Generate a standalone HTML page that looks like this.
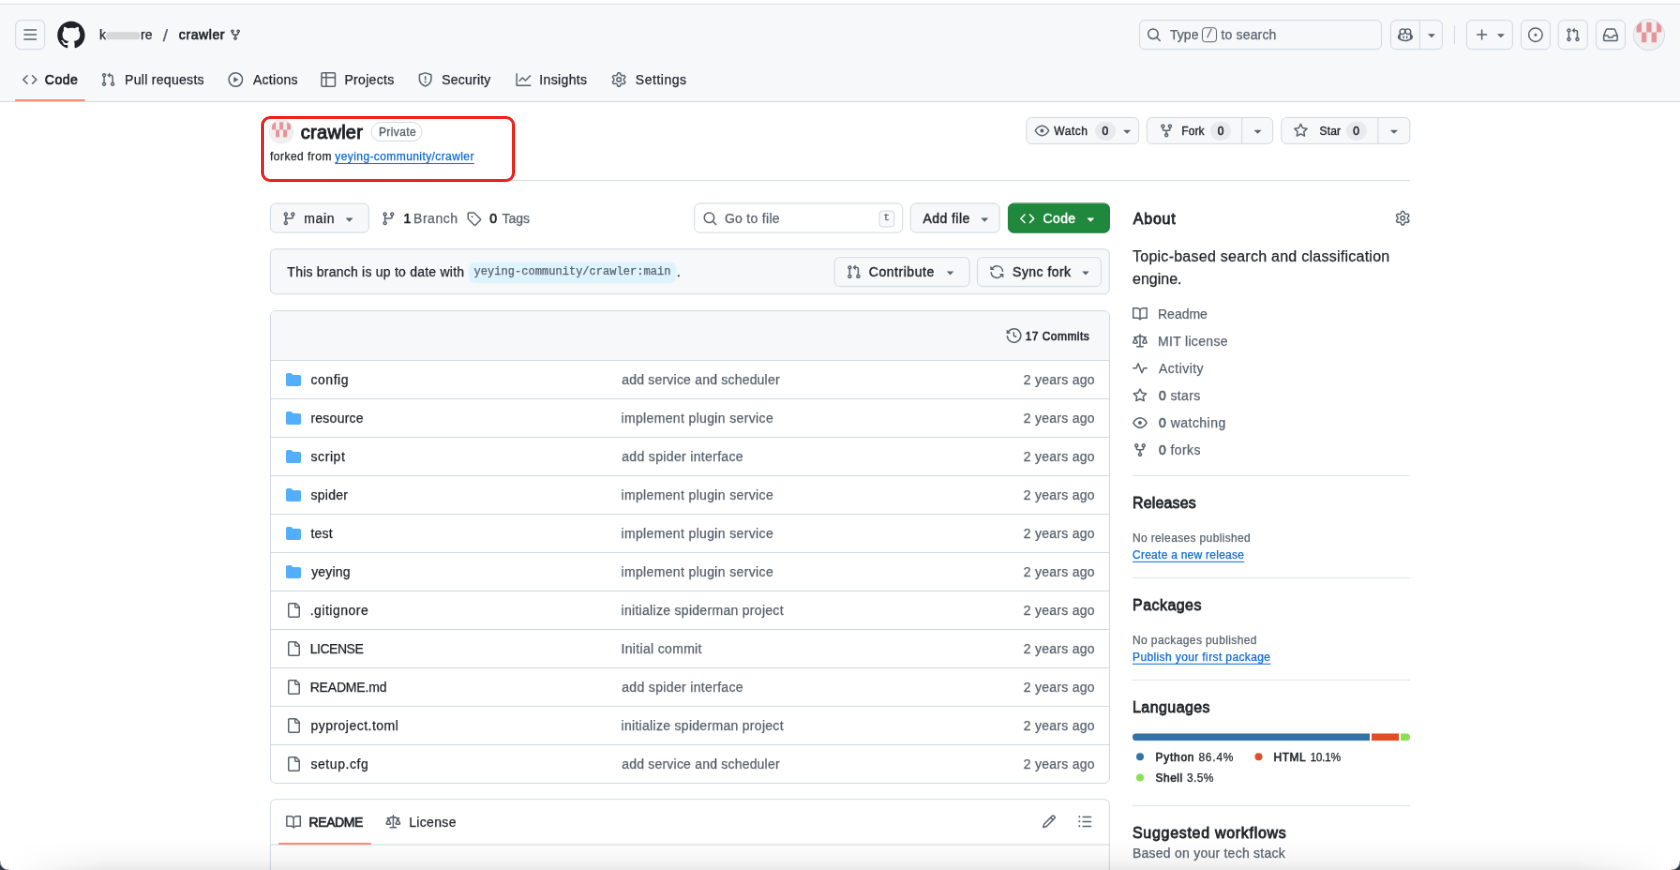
<!DOCTYPE html>
<html lang="en"><head><meta charset="utf-8"><title>crawler</title>
<style>
*{box-sizing:border-box}
html,body{margin:0;padding:0}
html{background:#fff}
body{width:1680px;height:870px;overflow:hidden;position:relative;background:#fff;font-family:"Liberation Sans",sans-serif;color:#1f2328}
#topstrip{position:absolute;left:0;top:0;width:1680px;height:5px;background:linear-gradient(#ffffff 0,#ffffff 55%,#ececec 80%,#e4e4e4 100%);z-index:5}
#page{position:absolute;left:0;top:0;width:1792px;height:930px;will-change:transform;-webkit-text-stroke:0.25px currentColor;transform:translateY(4.6px) scale(0.9375);transform-origin:0 0;font-size:14px;line-height:1.5}
svg{display:inline-block;vertical-align:text-bottom;overflow:visible;flex:none}
a{color:#0969da;text-decoration:underline;text-underline-offset:.2rem}
/* header */
#hdr{position:absolute;left:0;top:0;width:1792px;height:103.5px;background:#f6f8fa;box-shadow:inset 0 -1px 0 #d1d9e0}
.hbtn{position:absolute;height:32px;border:1px solid #d1d9e0;border-radius:6px;background:#f6f8fa;color:#59636e;display:flex;align-items:center;justify-content:center}
.tab{position:absolute;height:48px;display:flex;align-items:center;padding:0 8px;font-size:14px;color:#1f2328;white-space:nowrap}
.tab svg{color:#59636e;margin-right:8px}
.tab span{top:0.6px}
.tab.sel span{-webkit-text-stroke:0.66px currentColor}
.tab.sel:after{content:"";position:absolute;left:0;right:0;bottom:1.1px;height:2.3px;background:#fd8c73;border-radius:6px}
#search{position:absolute;height:32px;border:1px solid #d1d9e0;border-radius:6px;background:#f6f8fa;color:#59636e;display:flex;align-items:center;font-size:14px;white-space:nowrap}
.abs{position:absolute;white-space:nowrap}
.ft{display:inline-block;position:relative;white-space:nowrap}
/* table */
#files{position:absolute;left:288px;top:326.1px;width:896px;border:1px solid #d1d9e0;border-radius:6px;overflow:hidden;background:#fff}
#files .head{height:52px;background:#f6f8fa;position:relative}
.row{height:41px;border-top:1px solid #d1d9e0;position:relative;font-size:14px}
.row .ic{position:absolute;left:16px;top:12px}
.row .nm{position:absolute;left:41.7px;top:9.9px;line-height:21px;color:#1f2328;white-space:nowrap}
.row .msg{position:absolute;left:373.5px;top:9.9px;line-height:21px;color:#59636e;white-space:nowrap}
.row .age{position:absolute;left:803.6px;top:9.9px;line-height:21px;color:#59636e;white-space:nowrap}
.dot{position:absolute;width:8px;height:8px;border-radius:50%}
.ft b{font-weight:400;-webkit-text-stroke:0.66px currentColor}

.crumb{line-height:32px;font-size:14px}
#cr-sep{font-size:19px;top:0.9px}
#redact{background:#d6d7d9;border-radius:3px}
#kbd{position:absolute;top:7px;width:16.2px;height:16px;border:1px solid #59636e;border-radius:3.5px;font-size:12.5px;line-height:13px;text-align:center;color:#59636e;font-style:italic}

#redbox{position:absolute;left:261.3px;top:115.5px;width:254px;height:66.2px;border:3px solid #ee2620;border-radius:9px;z-index:6}
#botshadow{position:absolute;left:0;top:838px;width:1680px;height:32px;background:linear-gradient(rgba(0,0,0,0) 0,rgba(0,0,0,.015) 40%,rgba(0,0,0,.045) 75%,rgba(0,0,0,.085) 100%);z-index:7;-webkit-mask-image:linear-gradient(to right,rgba(0,0,0,0) 8px,#000 105px,#000 1575px,rgba(0,0,0,0) 1672px);mask-image:linear-gradient(to right,rgba(0,0,0,0) 8px,#000 105px,#000 1575px,rgba(0,0,0,0) 1672px)}
.corner{position:absolute;bottom:0;width:9px;height:9px;z-index:8;background:radial-gradient(circle at 9px 0,rgba(0,0,0,0) 8px,rgba(26,34,51,.9) 10px)}

#cr-k{letter-spacing:0.000px;transform:translateX(0.00px)}
#cr-re{letter-spacing:0.000px;transform:translateX(0.00px)}
#cr-sep{letter-spacing:0.000px;transform:translateX(0.00px)}
#cr-repo{letter-spacing:0.587px;transform:translateX(0.00px)}
#t0{letter-spacing:0.498px;transform:translateX(0.00px)}
#t1{letter-spacing:0.302px;transform:translateX(1.71px)}
#t2{letter-spacing:0.267px;transform:translateX(2.67px)}
#t3{letter-spacing:0.305px;transform:translateX(1.28px)}
#t4{letter-spacing:0.213px;transform:translateX(1.60px)}
#t5{letter-spacing:0.366px;transform:translateX(0.85px)}
#t6{letter-spacing:0.518px;transform:translateX(1.71px)}
#s-type{letter-spacing:0.000px;transform:translateX(1.60px)}
#s-to{letter-spacing:0.160px;transform:translateX(0.64px)}
#title{letter-spacing:0.267px;transform:translateX(0.85px)}
#privt{letter-spacing:0.391px;transform:translateX(0.00px)}
#fk1{letter-spacing:0.480px;transform:translateX(0.00px)}
#fk2{letter-spacing:0.408px;transform:translateX(0.00px)}
#w-t{letter-spacing:0.533px;transform:translateX(0.00px)}
#w-c{letter-spacing:0.000px;transform:translateX(0.00px)}
#f-t{letter-spacing:0.107px;transform:translateX(0.00px)}
#f-c{letter-spacing:0.000px;transform:translateX(0.00px)}
#st-t{letter-spacing:0.213px;transform:translateX(0.00px)}
#st-c{letter-spacing:0.000px;transform:translateX(0.00px)}
#m-t{letter-spacing:0.640px;transform:translateX(-1.07px)}
#br1{letter-spacing:0.000px;transform:translateX(0.00px)}
#br2{letter-spacing:0.512px;transform:translateX(0.00px)}
#tg1{letter-spacing:0.000px;transform:translateX(0.00px)}
#tg2{letter-spacing:0.000px;transform:translateX(0.00px)}
#gtf{letter-spacing:0.296px;transform:translateX(-0.75px)}
#af-t{letter-spacing:0.427px;transform:translateX(0.00px)}
#cd-t{letter-spacing:0.356px;transform:translateX(0.00px)}
#binfo{letter-spacing:0.228px;transform:translateX(0.75px)}
#bname-t{letter-spacing:0.034px;transform:translateX(0.00px)}
#ct-t{letter-spacing:0.545px;transform:translateX(-0.64px)}
#sy-t{letter-spacing:0.453px;transform:translateX(0.00px)}
#cm-t{letter-spacing:0.439px;transform:translateX(-0.85px)}
#rd-t{letter-spacing:-0.427px;transform:translateX(0.00px)}
#lc-t{letter-spacing:0.320px;transform:translateX(-1.07px)}
#h-about{letter-spacing:0.800px;transform:translateX(0.75px)}
#desc1{letter-spacing:0.255px;transform:translateX(0.00px)}
#desc2{letter-spacing:0.000px;transform:translateX(0.00px)}
#sl0{letter-spacing:0.000px;transform:translateX(-1.07px)}
#sl1{letter-spacing:0.320px;transform:translateX(-1.07px)}
#sl2{letter-spacing:0.457px;transform:translateX(0.00px)}
#sl3{letter-spacing:0.356px;transform:translateX(0.00px)}
#sl4{letter-spacing:0.474px;transform:translateX(0.00px)}
#sl5{letter-spacing:0.409px;transform:translateX(0.00px)}
#h-rel{letter-spacing:0.137px;transform:translateX(0.00px)}
#norel{letter-spacing:0.352px;transform:translateX(0.00px)}
#crel{letter-spacing:0.258px;transform:translateX(0.00px)}
#h-pkg{letter-spacing:0.457px;transform:translateX(0.00px)}
#nopkg{letter-spacing:0.389px;transform:translateX(0.00px)}
#ppkg{letter-spacing:0.384px;transform:translateX(0.00px)}
#h-lang{letter-spacing:0.427px;transform:translateX(0.00px)}
#lg-py{letter-spacing:0.725px;transform:translateX(0.00px)}
#lg-pyp{letter-spacing:0.773px;transform:translateX(0.00px)}
#lg-ht{letter-spacing:0.498px;transform:translateX(-0.75px)}
#lg-htp{letter-spacing:-0.347px;transform:translateX(-0.64px)}
#lg-sh{letter-spacing:0.480px;transform:translateX(0.00px)}
#lg-shp{letter-spacing:0.391px;transform:translateX(0.00px)}
#h-sug{letter-spacing:0.699px;transform:translateX(0.00px)}
#based{letter-spacing:0.237px;transform:translateX(0.00px)}
#n0{letter-spacing:0.555px;transform:translateX(0.75px)}
#g0{letter-spacing:0.204px;transform:translateX(0.75px)}
#a0{letter-spacing:0.256px;transform:translateX(-0.75px)}
#n1{letter-spacing:0.244px;transform:translateX(0.75px)}
#g1{letter-spacing:0.352px;transform:translateX(0.00px)}
#a1{letter-spacing:0.256px;transform:translateX(-0.75px)}
#n2{letter-spacing:0.597px;transform:translateX(0.75px)}
#g2{letter-spacing:0.337px;transform:translateX(0.75px)}
#a2{letter-spacing:0.256px;transform:translateX(-0.75px)}
#n3{letter-spacing:0.277px;transform:translateX(0.75px)}
#g3{letter-spacing:0.352px;transform:translateX(0.00px)}
#a3{letter-spacing:0.256px;transform:translateX(-0.75px)}
#n4{letter-spacing:0.213px;transform:translateX(0.75px)}
#g4{letter-spacing:0.352px;transform:translateX(0.00px)}
#a4{letter-spacing:0.256px;transform:translateX(-0.75px)}
#n5{letter-spacing:0.171px;transform:translateX(1.49px)}
#g5{letter-spacing:0.352px;transform:translateX(0.00px)}
#a5{letter-spacing:0.256px;transform:translateX(-0.75px)}
#n6{letter-spacing:0.498px;transform:translateX(0.00px)}
#g6{letter-spacing:0.300px;transform:translateX(0.00px)}
#a6{letter-spacing:0.256px;transform:translateX(-0.75px)}
#n7{letter-spacing:-0.480px;transform:translateX(0.00px)}
#g7{letter-spacing:0.328px;transform:translateX(0.00px)}
#a7{letter-spacing:0.256px;transform:translateX(-0.75px)}
#n8{letter-spacing:-0.187px;transform:translateX(0.00px)}
#g8{letter-spacing:0.337px;transform:translateX(0.75px)}
#a8{letter-spacing:0.256px;transform:translateX(-0.75px)}
#n9{letter-spacing:0.476px;transform:translateX(0.75px)}
#g9{letter-spacing:0.300px;transform:translateX(0.00px)}
#a9{letter-spacing:0.256px;transform:translateX(-0.75px)}
#n10{letter-spacing:0.560px;transform:translateX(0.75px)}
#g10{letter-spacing:0.204px;transform:translateX(0.75px)}
#a10{letter-spacing:0.256px;transform:translateX(-0.75px)}
</style></head>
<body>
<div id="topstrip"></div>
<div id="page">
<div id="hdr">
<div class="hbtn" style="left:0;top:0;transform:translate(16.20px,16.20px);width:32px"><svg width="16" height="16" viewBox="0 0 16 16" fill="currentColor"><path d="M1 2.75A.75.75 0 0 1 1.75 2h12.5a.75.75 0 0 1 0 1.5H1.75A.75.75 0 0 1 1 2.75Zm0 5A.75.75 0 0 1 1.75 7h12.5a.75.75 0 0 1 0 1.5H1.75A.75.75 0 0 1 1 7.75ZM1.75 12h12.5a.75.75 0 0 1 0 1.5H1.75a.75.75 0 0 1 0-1.5Z"/></svg></div>
<svg class="abs" style="left:0;top:0;transform:translate(59.90px,16.40px);color:#1f2328" width="32" height="32" viewBox="0 0 24 24" fill="currentColor"><path d="M12 1C5.923 1 1 5.923 1 12c0 4.867 3.149 8.979 7.521 10.436.55.096.756-.233.756-.522 0-.262-.013-1.128-.013-2.049-2.764.509-3.479-.674-3.699-1.292-.124-.317-.66-1.293-1.127-1.554-.385-.207-.936-.715-.014-.729.866-.014 1.485.797 1.691 1.128.99 1.663 2.571 1.196 3.204.907.096-.715.385-1.196.701-1.471-2.448-.275-5.005-1.224-5.005-5.432 0-1.196.426-2.186 1.128-2.956-.111-.275-.496-1.402.11-2.915 0 0 .921-.288 3.024 1.128a10.193 10.193 0 0 1 2.75-.371c.936 0 1.871.123 2.75.371 2.104-1.43 3.025-1.128 3.025-1.128.605 1.513.221 2.64.111 2.915.701.77 1.127 1.747 1.127 2.956 0 4.222-2.571 5.157-5.019 5.432.399.344.743 1.004.743 2.035 0 1.471-.014 2.654-.014 3.025 0 .289.206.632.756.522C19.851 20.979 23 16.854 23 12c0-6.077-4.922-11-11-11Z"/></svg>
<div class="abs crumb" style="left:0;top:0;transform:translate(106.03px,16.40px);"><span class="ft" id="cr-k">k</span></div>
<div class="abs" id="redact" style="left:0;top:0;transform:translate(113.17px,29.23px);width:35.9px;height:8.0px"></div>
<div class="abs crumb" style="left:0;top:0;transform:translate(149.97px,16.40px);"><span class="ft" id="cr-re">re</span></div>
<div class="abs crumb" style="left:0;top:0;transform:translate(173.87px,16.40px);color:#59636e"><span class="ft" id="cr-sep">/</span></div>
<div class="abs crumb" style="left:0;top:0;transform:translate(190.83px,16.40px);-webkit-text-stroke:0.66px currentColor"><span class="ft" id="cr-repo">crawler</span></div>
<svg class="abs" style="left:0;top:0;transform:translate(245.04px,26.11px);color:#1f2328" width="12" height="12" viewBox="0 0 12 12" fill="none" stroke="currentColor" stroke-width="1.05"><circle cx="2.9" cy="2.2" r="1.25"/><circle cx="9.1" cy="2.2" r="1.25"/><circle cx="6" cy="9.8" r="1.25"/><path d="M2.9 3.4v.9c0 1 .7 1.7 1.7 1.7h2.8c1 0 1.700-.7 1.700-1.700v-.9M6 6v2.600"/></svg>
<div class="tab sel" style="left:0;top:0;transform:translate(15.79px,56.00px);width:74.7px;"><svg width="16" height="16" viewBox="0 0 16 16" fill="currentColor"><path d="m11.28 3.22 4.25 4.25a.75.75 0 0 1 0 1.06l-4.25 4.25a.749.749 0 0 1-1.275-.326.749.749 0 0 1 .215-.734L13.94 8l-3.72-3.72a.749.749 0 0 1 .326-1.275.749.749 0 0 1 .734.215Zm-6.56 0a.751.751 0 0 1 1.042.018.751.751 0 0 1 .018 1.042L2.06 8l3.72 3.72a.749.749 0 0 1-.326 1.275.749.749 0 0 1-.734-.215L.47 8.53a.75.75 0 0 1 0-1.06Z"/></svg><span class="ft" id="t0">Code</span></div>
<div class="tab" style="left:0;top:0;transform:translate(99.31px,56.00px);"><svg width="16" height="16" viewBox="0 0 16 16" fill="currentColor"><path d="M1.5 3.25a2.25 2.25 0 1 1 3 2.122v5.256a2.251 2.251 0 1 1-1.5 0V5.372A2.25 2.25 0 0 1 1.5 3.25Zm5.677-.177L9.573.677A.25.25 0 0 1 10 .854V2.5h1A2.5 2.5 0 0 1 13.5 5v5.628a2.251 2.251 0 1 1-1.5 0V5a1 1 0 0 0-1-1h-1v1.646a.25.25 0 0 1-.427.177L7.177 3.427a.25.25 0 0 1 0-.354ZM3.75 2.5a.75.75 0 1 0 0 1.5.75.75 0 0 0 0-1.5Zm0 9.5a.75.75 0 1 0 0 1.5.75.75 0 0 0 0-1.5Zm8.25.75a.75.75 0 1 0 1.5 0 .75.75 0 0 0-1.5 0Z"/></svg><span class="ft" id="t1">Pull requests</span></div>
<div class="tab" style="left:0;top:0;transform:translate(235.31px,56.00px);"><svg width="16" height="16" viewBox="0 0 16 16" fill="currentColor"><path d="M8 0a8 8 0 1 1 0 16A8 8 0 0 1 8 0ZM1.5 8a6.5 6.5 0 1 0 13 0 6.5 6.5 0 0 0-13 0Zm4.879-2.773 4.264 2.559a.25.25 0 0 1 0 .428l-4.264 2.559A.25.25 0 0 1 6 10.559V5.442a.25.25 0 0 1 .379-.215Z"/></svg><span class="ft" id="t2">Actions</span></div>
<div class="tab" style="left:0;top:0;transform:translate(334.19px,56.00px);"><svg width="16" height="16" viewBox="0 0 16 16" fill="currentColor"><path d="M0 1.75C0 .784.784 0 1.75 0h12.5C15.216 0 16 .784 16 1.75v12.5A1.75 1.75 0 0 1 14.25 16H1.75A1.75 1.75 0 0 1 0 14.25ZM6.5 6.5v8h7.75a.25.25 0 0 0 .25-.25V6.5Zm8-1.5V1.75a.25.25 0 0 0-.25-.25H6.5V5Zm-13 1.5v7.75c0 .138.112.25.25.25H5v-8ZM5 5V1.5H1.75a.25.25 0 0 0-.25.25V5Z"/></svg><span class="ft" id="t3">Projects</span></div>
<div class="tab" style="left:0;top:0;transform:translate(437.65px,56.00px);"><svg width="16" height="16" viewBox="0 0 16 16" fill="currentColor"><path d="M7.467.133a1.748 1.748 0 0 1 1.066 0l5.25 1.68A1.75 1.75 0 0 1 15 3.48V7c0 1.566-.32 3.182-1.303 4.682-.983 1.498-2.585 2.813-5.032 3.855a1.697 1.697 0 0 1-1.33 0c-2.447-1.042-4.049-2.357-5.032-3.855C1.32 10.182 1 8.566 1 7V3.48a1.75 1.75 0 0 1 1.217-1.667Zm.61 1.429a.25.25 0 0 0-.153 0l-5.25 1.68a.25.25 0 0 0-.174.238V7c0 1.358.275 2.666 1.057 3.86.784 1.194 2.121 2.34 4.366 3.297a.196.196 0 0 0 .154 0c2.245-.956 3.582-2.104 4.366-3.298C13.225 9.666 13.5 8.36 13.5 7V3.48a.251.251 0 0 0-.174-.237l-5.25-1.68ZM8.75 4.75v3a.75.75 0 0 1-1.5 0v-3a.75.75 0 0 1 1.5 0ZM9 10.5a1 1 0 1 1-2 0 1 1 0 0 1 2 0Z"/></svg><span class="ft" id="t4">Security</span></div>
<div class="tab" style="left:0;top:0;transform:translate(542.40px,56.00px);"><svg width="16" height="16" viewBox="0 0 16 16" fill="currentColor"><path d="M1.5 1.75V13.5h13.75a.75.75 0 0 1 0 1.5H.75a.75.75 0 0 1-.75-.75V1.75a.75.75 0 0 1 1.5 0Zm14.28 2.53-5.25 5.25a.75.75 0 0 1-1.06 0L7 7.06 4.28 9.78a.751.751 0 0 1-1.042-.018.751.751 0 0 1-.018-1.042l3.25-3.25a.75.75 0 0 1 1.06 0L10 7.94l4.72-4.72a.751.751 0 0 1 1.042.018.751.751 0 0 1 .018 1.042Z"/></svg><span class="ft" id="t5">Insights</span></div>
<div class="tab" style="left:0;top:0;transform:translate(644.16px,56.00px);"><svg width="16" height="16" viewBox="0 0 16 16" fill="currentColor"><path d="M8 0a8.2 8.2 0 0 1 .701.031C9.444.095 9.99.645 10.16 1.29l.288 1.107c.018.066.079.158.212.224.231.114.454.243.668.386.123.082.233.09.299.071l1.103-.303c.644-.176 1.392.021 1.82.63.27.385.506.792.704 1.218.315.675.111 1.422-.364 1.891l-.814.806c-.049.048-.098.147-.088.294.016.257.016.515 0 .772-.01.147.038.246.088.294l.814.806c.475.469.679 1.216.364 1.891a7.977 7.977 0 0 1-.704 1.217c-.428.61-1.176.807-1.82.63l-1.102-.302c-.067-.019-.177-.011-.3.071a5.909 5.909 0 0 1-.668.386c-.133.066-.194.158-.211.224l-.29 1.106c-.168.646-.715 1.196-1.458 1.26a8.006 8.006 0 0 1-1.402 0c-.743-.064-1.289-.614-1.458-1.26l-.289-1.106c-.018-.066-.079-.158-.212-.224a5.738 5.738 0 0 1-.668-.386c-.123-.082-.233-.09-.299-.071l-1.103.303c-.644.176-1.392-.021-1.82-.63a8.12 8.12 0 0 1-.704-1.218c-.315-.675-.111-1.422.363-1.891l.815-.806c.05-.048.098-.147.088-.294a6.214 6.214 0 0 1 0-.772c.01-.147-.038-.246-.088-.294l-.815-.806C.635 6.045.431 5.298.746 4.623a7.920 7.920 0 0 1 .704-1.217c.428-.61 1.176-.807 1.82-.63l1.102.302c.067.019.177.011.3-.071.214-.143.437-.272.668-.386.133-.066.194-.158.211-.224l.29-1.106C6.009.645 6.556.095 7.299.03 7.530.010 7.764 0 8 0Zm-.571 1.525c-.036.003-.108.036-.137.146l-.289 1.105c-.147.561-.549.967-.998 1.189-.173.086-.34.183-.5.29-.417.278-.97.423-1.529.27l-1.103-.303c-.109-.03-.175.016-.195.045-.22.312-.412.644-.573.99-.014.031-.021.11.059.19l.815.806c.411.406.562.957.53 1.456a4.709 4.709 0 0 0 0 .582c.032.499-.119 1.05-.53 1.456l-.815.806c-.081.08-.073.159-.059.19.162.346.353.677.573.989.02.03.085.076.195.046l1.102-.303c.56-.153 1.113-.008 1.53.27.161.107.328.204.501.29.447.222.85.629.997 1.189l.289 1.105c.029.109.101.143.137.146a6.600 6.600 0 0 0 1.142 0c.036-.003.108-.036.137-.146l.289-1.105c.147-.561.549-.967.998-1.189.173-.086.34-.183.5-.29.417-.278.97-.423 1.529-.27l1.103.303c.109.029.175-.016.195-.045.22-.313.411-.644.573-.99.014-.031.021-.11-.059-.19l-.815-.806c-.411-.406-.562-.957-.53-1.456a4.709 4.709 0 0 0 0-.582c-.032-.499.119-1.05.53-1.456l.815-.806c.081-.08.073-.159.059-.19a6.464 6.464 0 0 0-.573-.989c-.02-.03-.085-.076-.195-.046l-1.102.303c-.56.153-1.113.008-1.53-.27a4.440 4.440 0 0 0-.501-.29c-.447-.222-.85-.629-.997-1.189l-.289-1.105c-.029-.11-.101-.143-.137-.146a6.600 6.600 0 0 0-1.142 0ZM11 8a3 3 0 1 1-6 0 3 3 0 0 1 6 0ZM9.500 8a1.500 1.500 0 1 0-3.001.001A1.500 1.500 0 0 0 9.500 8Z"/></svg><span class="ft" id="t6">Settings</span></div>
<div id="search" style="left:0;top:0;transform:translate(1214.97px,16.20px);width:259.2px"><svg style="position:absolute;left:6.6px;top:7px" width="16" height="16" viewBox="0 0 16 16" fill="currentColor"><path d="M10.68 11.74a6 6 0 0 1-7.922-8.982 6 6 0 0 1 8.982 7.922l3.04 3.04a.749.749 0 0 1-.326 1.275.749.749 0 0 1-.734-.215ZM11.5 7a4.499 4.499 0 1 0-8.997 0A4.499 4.499 0 0 0 11.500 7Z"/></svg><span class="abs" style="left:30.5px;top:4.6px;line-height:21px"><span class="ft" id="s-type">Type</span></span><span id="kbd" style="left:65.7px">/</span><span class="abs" style="left:85.9px;top:4.6px;line-height:21px"><span class="ft" id="s-to">to search</span></span></div>
<div class="hbtn" style="left:0;top:0;transform:translate(1482.91px,16.20px);width:56.3px"><svg style="position:absolute;left:6.7px;top:7px" width="16" height="16" viewBox="0 0 16 16" fill="currentColor"><path d="M7.998 15.035c-4.562 0-7.873-2.914-7.998-3.749V9.338c.085-.628.677-1.686 1.588-2.065.013-.07.024-.143.036-.218.029-.183.06-.384.126-.612-.201-.508-.254-1.084-.254-1.656 0-.87.128-1.769.693-2.484.579-.733 1.494-1.124 2.724-1.261 1.206-.134 2.262.034 2.944.765.05.053.096.108.139.165.044-.057.094-.112.143-.165.682-.731 1.738-.899 2.944-.765 1.23.137 2.145.528 2.724 1.261.566.715.693 1.614.693 2.484 0 .572-.053 1.148-.254 1.656.066.228.098.429.126.612.012.076.024.148.037.218.924.385 1.522 1.471 1.591 2.095v1.872c0 .766-3.351 3.795-8.002 3.795Zm0-1.485c2.28 0 4.584-1.11 5.002-1.433V7.862l-.023-.116c-.49.21-1.075.291-1.727.291-1.146 0-2.059-.327-2.71-.991A3.222 3.222 0 0 1 8 6.303a3.240 3.240 0 0 1-.544.743c-.65.664-1.563.991-2.71.991-.652 0-1.236-.081-1.727-.291l-.023.116v4.255c.419.323 2.722 1.433 5.002 1.433ZM6.762 2.830c-.193-.206-.637-.413-1.682-.297-1.019.113-1.479.404-1.713.7-.247.312-.369.789-.369 1.554 0 .793.129 1.171.308 1.371.162.181.519.379 1.442.379.853 0 1.339-.235 1.638-.54.315-.322.527-.827.617-1.553.117-.935-.037-1.395-.241-1.614Zm4.155-.297c-1.044-.116-1.488.091-1.681.297-.204.219-.359.679-.242 1.614.091.726.303 1.231.618 1.553.299.305.784.54 1.638.54.922 0 1.280-.198 1.442-.379.179-.2.308-.578.308-1.371 0-.765-.123-1.242-.370-1.554-.233-.296-.693-.587-1.713-.7ZM6.250 9.037a.750.750 0 0 1 .750.750v1.501a.750.750 0 0 1-1.500 0V9.787a.750.750 0 0 1 .750-.750Zm4.250.750v1.501a.750.750 0 0 1-1.500 0V9.787a.750.750 0 0 1 1.500 0Z"/></svg><span style="position:absolute;left:30.3px;top:-1px;width:1px;height:32px;background:#d1d9e0"></span><svg style="position:absolute;left:34.6px;top:7px" width="16" height="16" viewBox="0 0 16 16" fill="currentColor"><path d="m4.427 7.427 3.396 3.396a.25.25 0 0 0 .354 0l3.396-3.396A.25.25 0 0 0 11.396 7H4.604a.25.25 0 0 0-.177.427Z"/></svg></div>
<div class="abs" style="left:0;top:0;transform:translate(1550.97px,22.20px);width:1px;height:20px;background:#d1d9e0"></div>
<div class="hbtn" style="left:0;top:0;transform:translate(1563.87px,16.20px);width:50.0px"><svg style="position:absolute;left:7.5px;top:7px" width="16" height="16" viewBox="0 0 16 16" fill="currentColor"><path d="M7.75 2a.75.75 0 0 1 .75.75V7h4.25a.75.75 0 0 1 0 1.5H8.5v4.25a.75.75 0 0 1-1.5 0V8.500H2.750a.750.750 0 0 1 0-1.500H7V2.750A.750.750 0 0 1 7.750 2Z"/></svg><svg style="position:absolute;left:27.7px;top:7px" width="16" height="16" viewBox="0 0 16 16" fill="currentColor"><path d="m4.427 7.427 3.396 3.396a.25.25 0 0 0 .354 0l3.396-3.396A.25.25 0 0 0 11.396 7H4.604a.25.25 0 0 0-.177.427Z"/></svg></div>
<div class="hbtn" style="left:0;top:0;transform:translate(1621.90px,16.20px);width:32px"><svg width="16" height="16" viewBox="0 0 16 16" fill="currentColor"><path d="M8 9.5a1.5 1.5 0 1 0 0-3 1.5 1.5 0 0 0 0 3ZM8 0a8 8 0 1 1 0 16A8 8 0 0 1 8 0ZM1.500 8a6.500 6.500 0 1 0 13 0 6.500 6.500 0 0 0-13 0Z"/></svg></div>
<div class="hbtn" style="left:0;top:0;transform:translate(1661.69px,16.20px);width:32px"><svg width="16" height="16" viewBox="0 0 16 16" fill="currentColor"><path d="M1.5 3.25a2.25 2.25 0 1 1 3 2.122v5.256a2.251 2.251 0 1 1-1.5 0V5.372A2.25 2.25 0 0 1 1.5 3.25Zm5.677-.177L9.573.677A.25.25 0 0 1 10 .854V2.5h1A2.5 2.5 0 0 1 13.5 5v5.628a2.251 2.251 0 1 1-1.5 0V5a1 1 0 0 0-1-1h-1v1.646a.25.25 0 0 1-.427.177L7.177 3.427a.25.25 0 0 1 0-.354ZM3.75 2.5a.75.75 0 1 0 0 1.5.75.75 0 0 0 0-1.5Zm0 9.5a.75.75 0 1 0 0 1.5.75.75 0 0 0 0-1.5Zm8.25.75a.75.75 0 1 0 1.5 0 .75.75 0 0 0-1.5 0Z"/></svg></div>
<div class="hbtn" style="left:0;top:0;transform:translate(1701.90px,16.20px);width:32px"><svg width="16" height="16" viewBox="0 0 16 16" fill="currentColor"><path d="M2.800 2.060A1.750 1.750 0 0 1 4.410 1h7.180c.700 0 1.333.417 1.610 1.060l2.740 6.395c.040.093.060.194.060.295v4.500A1.750 1.750 0 0 1 14.250 15H1.750A1.750 1.750 0 0 1 0 13.250v-4.500c0-.101.020-.202.060-.295Zm1.610.440a.250.250 0 0 0-.230.152L1.887 8H4.750a.750.750 0 0 1 .600.300L6.625 10h2.750l1.275-1.700a.750.750 0 0 1 .600-.300h2.863L11.820 2.652a.250.250 0 0 0-.230-.152Zm10.090 7h-2.875l-1.275 1.700a.750.750 0 0 1-.600.300h-3.500a.750.750 0 0 1-.600-.300L4.375 9.500H1.500v3.750c0 .138.112.250.250.250h12.500a.250.250 0 0 0 .250-.250Z"/></svg></div>
<svg style="overflow:hidden;position:absolute;left:0;top:0;transform:translate(1742.93px,16.20px);border-radius:50%;box-shadow:0 0 0 1px #d1d9e0" width="32" height="32" viewBox="0 0 12 12"><circle cx="6" cy="6" r="6" fill="#f0f0f0"/><g fill="#e8929b"><rect x="1" y="1" width="2" height="4"/><rect x="5" y="1" width="2" height="4"/><rect x="9" y="1" width="2" height="4"/><rect x="3" y="5" width="2" height="4"/><rect x="7" y="5" width="2" height="4"/></g></svg>
</div>
<svg style="overflow:hidden;position:absolute;left:0;top:0;transform:translate(288.11px,123.41px);border-radius:50%;box-shadow:0 0 0 1px #d1d9e0b0" width="24" height="24" viewBox="0 0 12 12"><circle cx="6" cy="6" r="6" fill="#f0f0f0"/><g fill="#e8929b"><rect x="1" y="1" width="2" height="4"/><rect x="5" y="1" width="2" height="4"/><rect x="9" y="1" width="2" height="4"/><rect x="3" y="5" width="2" height="4"/><rect x="7" y="5" width="2" height="4"/></g></svg>
<div class="abs" style="left:0;top:0;transform:translate(320.00px,121.00px);font-size:20px;font-weight:400;line-height:30px;color:#1f2328;-webkit-text-stroke:0.96px currentColor;"><span class="ft" id="title">crawler</span></div>
<div class="abs" style="left:0;top:0;transform:translate(395.57px,125.07px);width:54.72px;height:20.59px;border:1px solid #d1d9e0;border-radius:2em"></div>
<div class="abs" style="left:0;top:0;transform:translate(403.95px,127.00px);font-size:12px;font-weight:400;line-height:18px;color:#59636e;-webkit-text-stroke:0.36px currentColor;"><span class="ft" id="privt">Private</span></div>
<div class="abs" style="left:0;top:0;transform:translate(288.00px,153.03px);font-size:12px;font-weight:400;line-height:18px;color:#1f2328;"><span class="ft" id="fk1">forked from</span></div>
<div class="abs" style="left:0;top:0;transform:translate(357.33px,153.03px);font-size:12px;font-weight:400;line-height:18px;color:#0969da;"><span class="ft" id="fk2"><a>yeying-community/crawler</a></span></div>
<div class="abs" style="left:0;top:0;transform:translate(288.00px,187.09px);width:1216.00px;height:1.07px;background:#d1d9e0"></div>
<div class="abs" style="left:0;top:0;transform:translate(1094.24px,119.95px);width:120.85px;height:28.91px;border:1px solid #d1d9e0;border-radius:6px;background:#f6f8fa;"></div>
<svg style="position:absolute;left:0;top:0;transform:translate(1103.47px,126.40px);color:#59636e" width="16" height="16" viewBox="0 0 16 16" fill="currentColor"><path d="M8 2c1.981 0 3.671.992 4.933 2.078 1.270 1.091 2.187 2.345 2.637 3.023a1.620 1.620 0 0 1 0 1.798c-.450.678-1.367 1.932-2.637 3.023C11.670 13.008 9.981 14 8 14c-1.981 0-3.671-.992-4.933-2.078C1.797 10.830.880 9.576.430 8.898a1.620 1.620 0 0 1 0-1.798c.450-.677 1.367-1.931 2.637-3.022C4.330 2.992 6.019 2 8 2ZM1.679 7.932a.120.120 0 0 0 0 .136c.411.622 1.241 1.750 2.366 2.717C5.176 11.758 6.527 12.500 8 12.500c1.473 0 2.825-.742 3.955-1.715 1.124-.967 1.954-2.096 2.366-2.717a.120.120 0 0 0 0-.136c-.412-.621-1.242-1.750-2.366-2.717C10.824 4.242 9.473 3.500 8 3.500c-1.473 0-2.825.742-3.955 1.715-1.124.967-1.954 2.096-2.366 2.717ZM8 10a2 2 0 1 1-.001-3.999A2 2 0 0 1 8 10Z"/></svg>
<div class="abs" style="left:0;top:0;transform:translate(1124.27px,126.15px);font-size:12px;font-weight:400;line-height:18px;color:#25292e;-webkit-text-stroke:0.36px currentColor;"><span class="ft" id="w-t">Watch</span></div>
<div class="abs" style="left:0;top:0;transform:translate(1168.00px,124.69px);width:21.65px;height:20.05px;background:#818b981f;border-radius:2em"></div>
<div class="abs" style="left:0;top:0;transform:translate(1175.47px,126.15px);font-size:12px;font-weight:400;line-height:18px;color:#1f2328;-webkit-text-stroke:0.58px currentColor;"><span class="ft" id="w-c">0</span></div>
<svg style="position:absolute;left:0;top:0;transform:translate(1194.13px,126.72px);color:#59636e" width="16" height="16" viewBox="0 0 16 16" fill="currentColor"><path d="m4.427 7.427 3.396 3.396a.25.25 0 0 0 .354 0l3.396-3.396A.25.25 0 0 0 11.396 7H4.604a.25.25 0 0 0-.177.427Z"/></svg>
<div class="abs" style="left:0;top:0;transform:translate(1222.77px,119.95px);width:103.47px;height:28.91px;border:1px solid #d1d9e0;border-radius:6px;background:#f6f8fa;border-radius:6px 0 0 6px"></div>
<div class="abs" style="left:0;top:0;transform:translate(1324.21px,119.95px);width:34.45px;height:28.91px;border:1px solid #d1d9e0;border-radius:6px;background:#f6f8fa;border-radius:0 6px 6px 0"></div>
<svg style="position:absolute;left:0;top:0;transform:translate(1236.16px,126.40px);color:#59636e" width="16" height="16" viewBox="0 0 16 16" fill="currentColor"><path d="M5 5.372v.878c0 .414.336.75.75.75h4.5a.75.75 0 0 0 .75-.75v-.878a2.25 2.25 0 1 1 1.5 0v.878a2.25 2.25 0 0 1-2.25 2.25h-1.5v2.128a2.251 2.251 0 1 1-1.5 0V8.5h-1.5A2.25 2.25 0 0 1 3.5 6.25v-.878a2.25 2.25 0 1 1 1.5 0ZM5 3.25a.75.75 0 1 0-1.5 0 .75.75 0 0 0 1.5 0Zm6.75.75a.75.75 0 1 0 0-1.5.75.75 0 0 0 0 1.5Zm-3 8.75a.75.75 0 1 0-1.5 0 .75.75 0 0 0 1.5 0Z"/></svg>
<div class="abs" style="left:0;top:0;transform:translate(1260.27px,126.15px);font-size:12px;font-weight:400;line-height:18px;color:#25292e;-webkit-text-stroke:0.36px currentColor;"><span class="ft" id="f-t">Fork</span></div>
<div class="abs" style="left:0;top:0;transform:translate(1290.99px,124.69px);width:21.55px;height:20.05px;background:#818b981f;border-radius:2em"></div>
<div class="abs" style="left:0;top:0;transform:translate(1298.67px,126.15px);font-size:12px;font-weight:400;line-height:18px;color:#1f2328;-webkit-text-stroke:0.58px currentColor;"><span class="ft" id="f-c">0</span></div>
<svg style="position:absolute;left:0;top:0;transform:translate(1333.55px,126.72px);color:#59636e" width="16" height="16" viewBox="0 0 16 16" fill="currentColor"><path d="m4.427 7.427 3.396 3.396a.25.25 0 0 0 .354 0l3.396-3.396A.25.25 0 0 0 11.396 7H4.604a.25.25 0 0 0-.177.427Z"/></svg>
<div class="abs" style="left:0;top:0;transform:translate(1366.24px,119.95px);width:105.17px;height:28.91px;border:1px solid #d1d9e0;border-radius:6px;background:#f6f8fa;border-radius:6px 0 0 6px"></div>
<div class="abs" style="left:0;top:0;transform:translate(1469.39px,119.95px);width:35.09px;height:28.91px;border:1px solid #d1d9e0;border-radius:6px;background:#f6f8fa;border-radius:0 6px 6px 0"></div>
<svg style="position:absolute;left:0;top:0;transform:translate(1379.41px,126.40px);color:#59636e" width="16" height="16" viewBox="0 0 16 16" fill="currentColor"><path d="M8 .25a.750.750 0 0 1 .673.418l1.882 3.815 4.210.612a.750.750 0 0 1 .416 1.279l-3.046 2.970.719 4.192a.751.751 0 0 1-1.088.791L8 12.347l-3.766 1.980a.750.750 0 0 1-1.088-.790l.720-4.194L.818 6.374a.750.750 0 0 1 .416-1.280l4.210-.611L7.327.668A.750.750 0 0 1 8 .250Zm0 2.445L6.615 5.500a.750.750 0 0 1-.564.410l-3.097.450 2.240 2.184a.750.750 0 0 1 .216.664l-.528 3.084 2.769-1.456a.750.750 0 0 1 .698 0l2.770 1.456-.530-3.084a.750.750 0 0 1 .216-.664l2.240-2.183-3.096-.450a.750.750 0 0 1-.564-.410L8 2.694Z"/></svg>
<div class="abs" style="left:0;top:0;transform:translate(1407.47px,126.15px);font-size:12px;font-weight:400;line-height:18px;color:#25292e;-webkit-text-stroke:0.36px currentColor;"><span class="ft" id="st-t">Star</span></div>
<div class="abs" style="left:0;top:0;transform:translate(1435.95px,124.69px);width:21.97px;height:20.05px;background:#818b981f;border-radius:2em"></div>
<div class="abs" style="left:0;top:0;transform:translate(1443.20px,126.15px);font-size:12px;font-weight:400;line-height:18px;color:#1f2328;-webkit-text-stroke:0.58px currentColor;"><span class="ft" id="st-c">0</span></div>
<svg style="position:absolute;left:0;top:0;transform:translate(1478.93px,126.72px);color:#59636e" width="16" height="16" viewBox="0 0 16 16" fill="currentColor"><path d="m4.427 7.427 3.396 3.396a.25.25 0 0 0 .354 0l3.396-3.396A.25.25 0 0 0 11.396 7H4.604a.25.25 0 0 0-.177.427Z"/></svg>
<div class="abs" style="left:0;top:0;transform:translate(287.84px,211.68px);width:105.92px;height:32.11px;border:1px solid #d1d9e0;border-radius:6px;background:#f6f8fa;"></div>
<svg style="position:absolute;left:0;top:0;transform:translate(300.59px,220.27px);color:#59636e" width="16" height="16" viewBox="0 0 16 16" fill="currentColor"><path d="M9.500 3.250a2.250 2.250 0 1 1 3 2.122V6A2.500 2.500 0 0 1 10 8.500H6a1 1 0 0 0-1 1v1.128a2.251 2.251 0 1 1-1.500 0V5.372a2.250 2.250 0 1 1 1.500 0v1.836A2.493 2.493 0 0 1 6 7h4a1 1 0 0 0 1-1v-.628A2.250 2.250 0 0 1 9.500 3.250Zm-6 0a.750.750 0 1 0 1.500 0 .750.750 0 0 0-1.500 0Zm8.250-.750a.750.750 0 1 0 0 1.500.750.750 0 0 0 0-1.500ZM4.250 12a.750.750 0 1 0 0 1.500.750.750 0 0 0 0-1.500Z"/></svg>
<div class="abs" style="left:0;top:0;transform:translate(325.33px,217.77px);font-size:14px;font-weight:400;line-height:21px;color:#1f2328;"><span class="ft" id="m-t">main</span></div>
<svg style="position:absolute;left:0;top:0;transform:translate(364.59px,220.59px);color:#59636e" width="16" height="16" viewBox="0 0 16 16" fill="currentColor"><path d="m4.427 7.427 3.396 3.396a.25.25 0 0 0 .354 0l3.396-3.396A.25.25 0 0 0 11.396 7H4.604a.25.25 0 0 0-.177.427Z"/></svg>
<svg style="position:absolute;left:0;top:0;transform:translate(406.40px,220.27px);color:#59636e" width="16" height="16" viewBox="0 0 16 16" fill="currentColor"><path d="M9.500 3.250a2.250 2.250 0 1 1 3 2.122V6A2.500 2.500 0 0 1 10 8.500H6a1 1 0 0 0-1 1v1.128a2.251 2.251 0 1 1-1.500 0V5.372a2.250 2.250 0 1 1 1.500 0v1.836A2.493 2.493 0 0 1 6 7h4a1 1 0 0 0 1-1v-.628A2.250 2.250 0 0 1 9.500 3.250Zm-6 0a.750.750 0 1 0 1.500 0 .750.750 0 0 0-1.500 0Zm8.250-.750a.750.750 0 1 0 0 1.500.750.750 0 0 0 0-1.500ZM4.250 12a.750.750 0 1 0 0 1.500.750.750 0 0 0 0-1.500Z"/></svg>
<div class="abs" style="left:0;top:0;transform:translate(430.40px,217.77px);font-size:14px;font-weight:400;line-height:21px;color:#1f2328;-webkit-text-stroke:0.67px currentColor;"><span class="ft" id="br1">1</span></div>
<div class="abs" style="left:0;top:0;transform:translate(441.07px,217.77px);font-size:14px;font-weight:400;line-height:21px;color:#59636e;"><span class="ft" id="br2">Branch</span></div>
<svg style="position:absolute;left:0;top:0;transform:translate(497.49px,220.27px);color:#59636e" width="16" height="16" viewBox="0 0 16 16" fill="currentColor"><path d="M1 7.775V2.750C1 1.784 1.784 1 2.750 1h5.025c.464 0 .910.184 1.238.513l6.250 6.250a1.750 1.750 0 0 1 0 2.474l-5.026 5.026a1.750 1.750 0 0 1-2.474 0l-6.250-6.250A1.752 1.752 0 0 1 1 7.775Zm1.500 0c0 .066.026.130.073.177l6.250 6.250a.250.250 0 0 0 .354 0l5.025-5.025a.250.250 0 0 0 0-.354l-6.250-6.250a.250.250 0 0 0-.177-.073H2.750a.250.250 0 0 0-.250.250ZM6 5a1 1 0 1 1 0 2 1 1 0 0 1 0-2Z"/></svg>
<div class="abs" style="left:0;top:0;transform:translate(522.13px,217.77px);font-size:14px;font-weight:400;line-height:21px;color:#1f2328;-webkit-text-stroke:0.67px currentColor;"><span class="ft" id="tg1">0</span></div>
<div class="abs" style="left:0;top:0;transform:translate(535.47px,217.77px);font-size:14px;font-weight:400;line-height:21px;color:#59636e;"><span class="ft" id="tg2">Tags</span></div>
<div class="abs" style="left:0;top:0;transform:translate(740.21px,211.68px);width:223.04px;height:32.11px;border:1px solid #d1d9e0;border-radius:6px;background:#fff"></div>
<svg style="position:absolute;left:0;top:0;transform:translate(749.44px,220.27px);color:#59636e" width="16" height="16" viewBox="0 0 16 16" fill="currentColor"><path d="M10.68 11.74a6 6 0 0 1-7.922-8.982 6 6 0 0 1 8.982 7.922l3.04 3.04a.749.749 0 0 1-.326 1.275.749.749 0 0 1-.734-.215ZM11.5 7a4.499 4.499 0 1 0-8.997 0A4.499 4.499 0 0 0 11.500 7Z"/></svg>
<div class="abs" style="left:0;top:0;transform:translate(773.65px,217.77px);font-size:14px;font-weight:400;line-height:21px;color:#59636e;"><span class="ft" id="gtf">Go to file</span></div>
<div class="abs" style="left:0;top:0;transform:translate(937.44px,219.47px);width:16.85px;height:17.81px;border:1px solid #d1d9e0;border-radius:4px;background:#f6f8fa"></div>
<div class="abs" style="left:937.9px;top:218.8px;width:15.9px;text-align:center;font:11px/17px 'Liberation Mono',monospace;color:#59636e">t</div>
<div class="abs" style="left:0;top:0;transform:translate(970.72px,211.68px);width:96.21px;height:32.11px;border:1px solid #d1d9e0;border-radius:6px;background:#f6f8fa;"></div>
<div class="abs" style="left:0;top:0;transform:translate(984.53px,217.77px);font-size:14px;font-weight:400;line-height:21px;color:#25292e;-webkit-text-stroke:0.42px currentColor;"><span class="ft" id="af-t">Add file</span></div>
<svg style="position:absolute;left:0;top:0;transform:translate(1042.24px,220.59px);color:#59636e" width="16" height="16" viewBox="0 0 16 16" fill="currentColor"><path d="m4.427 7.427 3.396 3.396a.25.25 0 0 0 .354 0l3.396-3.396A.25.25 0 0 0 11.396 7H4.604a.25.25 0 0 0-.177.427Z"/></svg>
<div class="abs" style="left:0;top:0;transform:translate(1074.93px,211.68px);width:109.33px;height:32.11px;background:#1f883d;border:1px solid #1a7f37;border-radius:6px"></div>
<svg style="position:absolute;left:0;top:0;transform:translate(1087.79px,220.27px);color:#fff" width="16" height="16" viewBox="0 0 16 16" fill="currentColor"><path d="m11.28 3.22 4.25 4.25a.75.75 0 0 1 0 1.06l-4.25 4.25a.749.749 0 0 1-1.275-.326.749.749 0 0 1 .215-.734L13.94 8l-3.72-3.72a.749.749 0 0 1 .326-1.275.749.749 0 0 1 .734.215Zm-6.56 0a.751.751 0 0 1 1.042.018.751.751 0 0 1 .018 1.042L2.06 8l3.72 3.72a.749.749 0 0 1-.326 1.275.749.749 0 0 1-.734-.215L.47 8.53a.75.75 0 0 1 0-1.06Z"/></svg>
<div class="abs" style="left:0;top:0;transform:translate(1112.53px,217.77px);font-size:14px;font-weight:400;line-height:21px;color:#fff;-webkit-text-stroke:0.42px currentColor;"><span class="ft" id="cd-t">Code</span></div>
<svg style="position:absolute;left:0;top:0;transform:translate(1155.31px,220.59px);color:#fff" width="16" height="16" viewBox="0 0 16 16" fill="currentColor"><path d="m4.427 7.427 3.396 3.396a.25.25 0 0 0 .354 0l3.396-3.396A.25.25 0 0 0 11.396 7H4.604a.25.25 0 0 0-.177.427Z"/></svg>
<div class="abs" style="left:0;top:0;transform:translate(287.84px,260.21px);width:896.32px;height:49.49px;border:1px solid #d1d9e0;border-radius:6px;background:#f6f8fa"></div>
<div class="abs" style="left:0;top:0;transform:translate(305.60px,274.94px);font-size:14px;font-weight:400;line-height:21px;color:#1f2328;"><span class="ft" id="binfo">This branch is up to date with</span></div>
<div class="abs" style="left:0;top:0;transform:translate(500.16px,274.77px);width:220.69px;height:21.55px;background:#ddf4ff;border-radius:6px"></div>
<div class="abs" style="left:0;top:0;transform:translate(505.60px,274.94px);font-size:12px;font-weight:400;line-height:21px;color:#59636e;font-family:'Liberation Mono',monospace;"><span class="ft" id="bname-t">yeying-community/crawler:main</span></div>
<div class="abs" style="left:0;top:0;transform:translate(721.71px,274.62px);font-size:14px;font-weight:400;line-height:21px;color:#1f2328;"><span class="ft" id="dot">.</span></div>
<div class="abs" style="left:0;top:0;transform:translate(889.65px,269.07px);width:144.85px;height:32.11px;border:1px solid #d1d9e0;border-radius:6px;background:#f6f8fa;"></div>
<svg style="position:absolute;left:0;top:0;transform:translate(902.61px,277.12px);color:#59636e" width="16" height="16" viewBox="0 0 16 16" fill="currentColor"><path d="M1.5 3.25a2.25 2.25 0 1 1 3 2.122v5.256a2.251 2.251 0 1 1-1.5 0V5.372A2.25 2.25 0 0 1 1.5 3.25Zm5.677-.177L9.573.677A.25.25 0 0 1 10 .854V2.5h1A2.5 2.5 0 0 1 13.5 5v5.628a2.251 2.251 0 1 1-1.5 0V5a1 1 0 0 0-1-1h-1v1.646a.25.25 0 0 1-.427.177L7.177 3.427a.25.25 0 0 1 0-.354ZM3.75 2.5a.75.75 0 1 0 0 1.5.75.75 0 0 0 0-1.5Zm0 9.5a.75.75 0 1 0 0 1.5.75.75 0 0 0 0-1.5Zm8.25.75a.75.75 0 1 0 1.5 0 .75.75 0 0 0-1.5 0Z"/></svg>
<div class="abs" style="left:0;top:0;transform:translate(927.36px,274.62px);font-size:14px;font-weight:400;line-height:21px;color:#25292e;-webkit-text-stroke:0.42px currentColor;"><span class="ft" id="ct-t">Contribute</span></div>
<svg style="position:absolute;left:0;top:0;transform:translate(1005.55px,277.44px);color:#59636e" width="16" height="16" viewBox="0 0 16 16" fill="currentColor"><path d="m4.427 7.427 3.396 3.396a.25.25 0 0 0 .354 0l3.396-3.396A.25.25 0 0 0 11.396 7H4.604a.25.25 0 0 0-.177.427Z"/></svg>
<div class="abs" style="left:0;top:0;transform:translate(1041.97px,269.07px);width:133.33px;height:32.11px;border:1px solid #d1d9e0;border-radius:6px;background:#f6f8fa;"></div>
<svg style="position:absolute;left:0;top:0;transform:translate(1055.36px,277.12px);color:#59636e" width="16" height="16" viewBox="0 0 16 16" fill="currentColor"><path d="M1.705 8.005a.750.750 0 0 1 .834.656 5.500 5.500 0 0 0 9.592 2.970l-1.204-1.204a.250.250 0 0 1 .177-.427h3.646a.250.250 0 0 1 .250.250v3.646a.250.250 0 0 1-.427.177l-1.380-1.380A7.002 7.002 0 0 1 1.050 8.840a.750.750 0 0 1 .656-.834ZM8 2.500a5.487 5.487 0 0 0-4.131 1.869l1.204 1.204A.250.250 0 0 1 4.896 6H1.250A.250.250 0 0 1 1 5.750V2.104a.250.250 0 0 1 .427-.177l1.380 1.380A7.002 7.002 0 0 1 14.950 7.160a.750.750 0 0 1-1.490.178A5.500 5.500 0 0 0 8 2.500Z"/></svg>
<div class="abs" style="left:0;top:0;transform:translate(1080.11px,274.62px);font-size:14px;font-weight:400;line-height:21px;color:#25292e;-webkit-text-stroke:0.42px currentColor;"><span class="ft" id="sy-t">Sync fork</span></div>
<svg style="position:absolute;left:0;top:0;transform:translate(1149.97px,277.44px);color:#59636e" width="16" height="16" viewBox="0 0 16 16" fill="currentColor"><path d="m4.427 7.427 3.396 3.396a.25.25 0 0 0 .354 0l3.396-3.396A.25.25 0 0 0 11.396 7H4.604a.25.25 0 0 0-.177.427Z"/></svg>
<div id="files"><div class="head"></div>
<div class="row"><svg class="ic" style="color:#54aeff" width="16" height="16" viewBox="0 0 16 16" fill="currentColor"><path d="M1.750 1A1.750 1.750 0 0 0 0 2.750v10.500C0 14.216.784 15 1.750 15h12.500A1.750 1.750 0 0 0 16 13.250v-8.500A1.750 1.750 0 0 0 14.250 3H7.500a.250.250 0 0 1-.200-.100l-.900-1.200C6.070 1.260 5.550 1 5 1H1.750Z"/></svg><span class="nm"><span class="ft" id="n0">config</span></span><span class="msg"><span class="ft" id="g0">add service and scheduler</span></span><span class="age"><span class="ft" id="a0">2 years ago</span></span></div>
<div class="row"><svg class="ic" style="color:#54aeff" width="16" height="16" viewBox="0 0 16 16" fill="currentColor"><path d="M1.750 1A1.750 1.750 0 0 0 0 2.750v10.500C0 14.216.784 15 1.750 15h12.500A1.750 1.750 0 0 0 16 13.250v-8.500A1.750 1.750 0 0 0 14.250 3H7.500a.250.250 0 0 1-.200-.100l-.900-1.200C6.070 1.260 5.550 1 5 1H1.750Z"/></svg><span class="nm"><span class="ft" id="n1">resource</span></span><span class="msg"><span class="ft" id="g1">implement plugin service</span></span><span class="age"><span class="ft" id="a1">2 years ago</span></span></div>
<div class="row"><svg class="ic" style="color:#54aeff" width="16" height="16" viewBox="0 0 16 16" fill="currentColor"><path d="M1.750 1A1.750 1.750 0 0 0 0 2.750v10.500C0 14.216.784 15 1.750 15h12.500A1.750 1.750 0 0 0 16 13.250v-8.500A1.750 1.750 0 0 0 14.250 3H7.500a.250.250 0 0 1-.200-.100l-.900-1.200C6.070 1.260 5.550 1 5 1H1.750Z"/></svg><span class="nm"><span class="ft" id="n2">script</span></span><span class="msg"><span class="ft" id="g2">add spider interface</span></span><span class="age"><span class="ft" id="a2">2 years ago</span></span></div>
<div class="row"><svg class="ic" style="color:#54aeff" width="16" height="16" viewBox="0 0 16 16" fill="currentColor"><path d="M1.750 1A1.750 1.750 0 0 0 0 2.750v10.500C0 14.216.784 15 1.750 15h12.500A1.750 1.750 0 0 0 16 13.250v-8.500A1.750 1.750 0 0 0 14.250 3H7.500a.250.250 0 0 1-.200-.100l-.900-1.200C6.070 1.260 5.550 1 5 1H1.750Z"/></svg><span class="nm"><span class="ft" id="n3">spider</span></span><span class="msg"><span class="ft" id="g3">implement plugin service</span></span><span class="age"><span class="ft" id="a3">2 years ago</span></span></div>
<div class="row"><svg class="ic" style="color:#54aeff" width="16" height="16" viewBox="0 0 16 16" fill="currentColor"><path d="M1.750 1A1.750 1.750 0 0 0 0 2.750v10.500C0 14.216.784 15 1.750 15h12.500A1.750 1.750 0 0 0 16 13.250v-8.500A1.750 1.750 0 0 0 14.250 3H7.500a.250.250 0 0 1-.200-.100l-.900-1.200C6.070 1.260 5.550 1 5 1H1.750Z"/></svg><span class="nm"><span class="ft" id="n4">test</span></span><span class="msg"><span class="ft" id="g4">implement plugin service</span></span><span class="age"><span class="ft" id="a4">2 years ago</span></span></div>
<div class="row"><svg class="ic" style="color:#54aeff" width="16" height="16" viewBox="0 0 16 16" fill="currentColor"><path d="M1.750 1A1.750 1.750 0 0 0 0 2.750v10.500C0 14.216.784 15 1.750 15h12.500A1.750 1.750 0 0 0 16 13.250v-8.500A1.750 1.750 0 0 0 14.250 3H7.500a.250.250 0 0 1-.200-.100l-.900-1.200C6.070 1.260 5.550 1 5 1H1.750Z"/></svg><span class="nm"><span class="ft" id="n5">yeying</span></span><span class="msg"><span class="ft" id="g5">implement plugin service</span></span><span class="age"><span class="ft" id="a5">2 years ago</span></span></div>
<div class="row"><svg class="ic" style="color:#59636e" width="16" height="16" viewBox="0 0 16 16" fill="currentColor"><path d="M2 1.750C2 .784 2.784 0 3.750 0h6.586c.464 0 .909.184 1.237.513l2.914 2.914c.329.328.513.773.513 1.237v9.586A1.750 1.750 0 0 1 13.250 16h-9.500A1.750 1.750 0 0 1 2 14.250Zm1.750-.250a.250.250 0 0 0-.250.250v12.500c0 .138.112.250.250.250h9.500a.250.250 0 0 0 .250-.250V6h-2.750A1.750 1.750 0 0 1 9 4.250V1.500Zm6.750.062V4.250c0 .138.112.250.250.250h2.688l-.011-.013-2.914-2.914-.013-.011Z"/></svg><span class="nm"><span class="ft" id="n6">.gitignore</span></span><span class="msg"><span class="ft" id="g6">initialize spiderman project</span></span><span class="age"><span class="ft" id="a6">2 years ago</span></span></div>
<div class="row"><svg class="ic" style="color:#59636e" width="16" height="16" viewBox="0 0 16 16" fill="currentColor"><path d="M2 1.750C2 .784 2.784 0 3.750 0h6.586c.464 0 .909.184 1.237.513l2.914 2.914c.329.328.513.773.513 1.237v9.586A1.750 1.750 0 0 1 13.250 16h-9.500A1.750 1.750 0 0 1 2 14.250Zm1.750-.250a.250.250 0 0 0-.250.250v12.500c0 .138.112.250.250.250h9.500a.250.250 0 0 0 .250-.250V6h-2.750A1.750 1.750 0 0 1 9 4.250V1.500Zm6.750.062V4.250c0 .138.112.250.250.250h2.688l-.011-.013-2.914-2.914-.013-.011Z"/></svg><span class="nm"><span class="ft" id="n7">LICENSE</span></span><span class="msg"><span class="ft" id="g7">Initial commit</span></span><span class="age"><span class="ft" id="a7">2 years ago</span></span></div>
<div class="row"><svg class="ic" style="color:#59636e" width="16" height="16" viewBox="0 0 16 16" fill="currentColor"><path d="M2 1.750C2 .784 2.784 0 3.750 0h6.586c.464 0 .909.184 1.237.513l2.914 2.914c.329.328.513.773.513 1.237v9.586A1.750 1.750 0 0 1 13.250 16h-9.500A1.750 1.750 0 0 1 2 14.250Zm1.750-.250a.250.250 0 0 0-.250.250v12.500c0 .138.112.250.250.250h9.500a.250.250 0 0 0 .250-.250V6h-2.750A1.750 1.750 0 0 1 9 4.250V1.500Zm6.750.062V4.250c0 .138.112.250.250.250h2.688l-.011-.013-2.914-2.914-.013-.011Z"/></svg><span class="nm"><span class="ft" id="n8">README.md</span></span><span class="msg"><span class="ft" id="g8">add spider interface</span></span><span class="age"><span class="ft" id="a8">2 years ago</span></span></div>
<div class="row"><svg class="ic" style="color:#59636e" width="16" height="16" viewBox="0 0 16 16" fill="currentColor"><path d="M2 1.750C2 .784 2.784 0 3.750 0h6.586c.464 0 .909.184 1.237.513l2.914 2.914c.329.328.513.773.513 1.237v9.586A1.750 1.750 0 0 1 13.250 16h-9.500A1.750 1.750 0 0 1 2 14.250Zm1.750-.250a.250.250 0 0 0-.250.250v12.500c0 .138.112.250.250.250h9.500a.250.250 0 0 0 .250-.250V6h-2.750A1.750 1.750 0 0 1 9 4.250V1.500Zm6.750.062V4.250c0 .138.112.250.250.250h2.688l-.011-.013-2.914-2.914-.013-.011Z"/></svg><span class="nm"><span class="ft" id="n9">pyproject.toml</span></span><span class="msg"><span class="ft" id="g9">initialize spiderman project</span></span><span class="age"><span class="ft" id="a9">2 years ago</span></span></div>
<div class="row"><svg class="ic" style="color:#59636e" width="16" height="16" viewBox="0 0 16 16" fill="currentColor"><path d="M2 1.750C2 .784 2.784 0 3.750 0h6.586c.464 0 .909.184 1.237.513l2.914 2.914c.329.328.513.773.513 1.237v9.586A1.750 1.750 0 0 1 13.250 16h-9.500A1.750 1.750 0 0 1 2 14.250Zm1.750-.250a.250.250 0 0 0-.250.250v12.500c0 .138.112.250.250.250h9.500a.250.250 0 0 0 .250-.250V6h-2.750A1.750 1.750 0 0 1 9 4.250V1.500Zm6.750.062V4.250c0 .138.112.250.250.250h2.688l-.011-.013-2.914-2.914-.013-.011Z"/></svg><span class="nm"><span class="ft" id="n10">setup.cfg</span></span><span class="msg"><span class="ft" id="g10">add service and scheduler</span></span><span class="age"><span class="ft" id="a10">2 years ago</span></span></div>
</div>
<svg style="position:absolute;left:0;top:0;transform:translate(1073.60px,344.96px);color:#59636e" width="16" height="16" viewBox="0 0 16 16" fill="currentColor"><path d="m.427 1.927 1.215 1.215a8.002 8.002 0 1 1-1.600 5.685.750.750 0 1 1 1.493-.154 6.500 6.500 0 1 0 1.180-4.458l1.358 1.358A.250.250 0 0 1 3.896 6H.250A.250.250 0 0 1 0 5.750V2.104a.250.250 0 0 1 .427-.177ZM7.750 4a.750.750 0 0 1 .750.750v2.992l2.028.812a.750.750 0 0 1-.557 1.392l-2.500-1A.751.751 0 0 1 7 8.250v-3.500A.750.750 0 0 1 7.750 4Z"/></svg>
<div class="abs" style="left:0;top:0;transform:translate(1094.61px,344.81px);font-size:12px;font-weight:400;line-height:18px;color:#1f2328;-webkit-text-stroke:0.58px currentColor;"><span class="ft" id="cm-t">17 Commits</span></div>
<div class="abs" style="left:0;top:0;transform:translate(287.84px,847.20px);width:896.32px;height:108.37px;border:1px solid #d1d9e0;border-radius:6px;background:#fff"></div>
<div class="abs" style="left:0;top:0;transform:translate(289.07px,895.57px);width:893.87px;height:1.07px;background:#d1d9e0"></div>
<svg style="position:absolute;left:0;top:0;transform:translate(305.07px,864.11px);color:#59636e" width="16" height="16" viewBox="0 0 16 16" fill="currentColor"><path d="M0 1.750A.750.750 0 0 1 .750 1h4.253c1.227 0 2.317.590 3 1.501A3.743 3.743 0 0 1 11.006 1h4.245a.750.750 0 0 1 .750.750v10.500a.750.750 0 0 1-.750.750h-4.507a2.250 2.250 0 0 0-1.591.659l-.622.621a.750.750 0 0 1-1.060 0l-.622-.621A2.250 2.250 0 0 0 5.258 13H.750a.750.750 0 0 1-.750-.750Zm7.251 10.324.004-5.073-.002-2.253A2.250 2.250 0 0 0 5.003 2.500H1.500v9h3.757a3.750 3.750 0 0 1 1.994.574ZM8.755 4.750l-.004 7.322a3.752 3.752 0 0 1 1.992-.572H14.500v-9h-3.495a2.250 2.250 0 0 0-2.250 2.250Z"/></svg>
<div class="abs" style="left:0;top:0;transform:translate(329.60px,861.61px);font-size:14px;font-weight:400;line-height:21px;color:#1f2328;-webkit-text-stroke:0.67px currentColor;"><span class="ft" id="rd-t">README</span></div>
<div class="abs" style="left:0;top:0;transform:translate(296.85px,894.08px);width:98.56px;height:2.13px;background:#fd8c73;border-radius:6px"></div>
<svg style="position:absolute;left:0;top:0;transform:translate(411.41px,864.11px);color:#59636e" width="16" height="16" viewBox="0 0 16 16" fill="currentColor"><path d="M8.750.750V2h.985c.304 0 .603.080.867.231l1.290.736c.038.022.080.033.124.033h2.234a.750.750 0 0 1 0 1.500h-.427l2.111 4.692a.750.750 0 0 1-.154.838l-.530-.530.529.531-.001.002-.002.002-.006.006-.006.005-.010.010-.045.040c-.210.176-.441.327-.686.450C14.556 10.780 13.880 11 13 11a4.498 4.498 0 0 1-2.023-.454 3.544 3.544 0 0 1-.686-.450l-.045-.040-.016-.015-.006-.006-.004-.004v-.001a.750.750 0 0 1-.154-.838L12.178 4.500h-.162c-.305 0-.604-.079-.868-.231l-1.290-.736a.245.245 0 0 0-.124-.033H8.750V13h2.500a.750.750 0 0 1 0 1.500h-6.500a.750.750 0 0 1 0-1.500h2.500V3.500h-.984a.245.245 0 0 0-.124.033l-1.289.737c-.265.150-.564.230-.869.230h-.162l2.112 4.692a.750.750 0 0 1-.154.838l-.530-.530.529.531-.001.002-.002.002-.006.006-.016.015-.045.040c-.210.176-.441.327-.686.450C4.556 10.780 3.880 11 3 11a4.498 4.498 0 0 1-2.023-.454 3.544 3.544 0 0 1-.686-.450l-.045-.040-.016-.015-.006-.006-.004-.004v-.001a.750.750 0 0 1-.154-.838L2.178 4.500H1.750a.750.750 0 0 1 0-1.500h2.234a.249.249 0 0 0 .125-.033l1.288-.737c.265-.150.564-.230.869-.230h.984V.750a.750.750 0 0 1 1.500 0Zm2.945 8.477c.285.135.718.273 1.305.273s1.020-.138 1.305-.273L13 6.327Zm-10 0c.285.135.718.273 1.305.273s1.020-.138 1.305-.273L3 6.327Z"/></svg>
<div class="abs" style="left:0;top:0;transform:translate(437.33px,861.61px);font-size:14px;font-weight:400;line-height:21px;color:#1f2328;"><span class="ft" id="lc-t">License</span></div>
<svg style="position:absolute;left:0;top:0;transform:translate(1110.93px,863.36px);color:#59636e" width="16" height="16" viewBox="0 0 16 16" fill="currentColor"><path d="M11.013 1.427a1.750 1.750 0 0 1 2.474 0l1.086 1.086a1.750 1.750 0 0 1 0 2.474l-8.610 8.610c-.210.210-.470.364-.756.445l-3.251.930a.750.750 0 0 1-.927-.928l.929-3.250c.081-.286.235-.547.445-.758l8.610-8.610Zm.176 4.823L9.750 4.810l-6.286 6.287a.253.253 0 0 0-.064.108l-.558 1.953 1.953-.558a.253.253 0 0 0 .108-.064Zm1.238-3.763a.250.250 0 0 0-.354 0L10.811 3.750l1.439 1.440 1.263-1.263a.250.250 0 0 0 0-.354Z"/></svg>
<svg style="position:absolute;left:0;top:0;transform:translate(1149.33px,863.36px);color:#59636e" width="16" height="16" viewBox="0 0 16 16" fill="currentColor"><path d="M5.750 2.500h8.500a.750.750 0 0 1 0 1.500h-8.500a.750.750 0 0 1 0-1.500Zm0 5h8.500a.750.750 0 0 1 0 1.500h-8.500a.750.750 0 0 1 0-1.500Zm0 5h8.500a.750.750 0 0 1 0 1.500h-8.500a.750.750 0 0 1 0-1.500ZM2 14a1 1 0 1 1 0-2 1 1 0 0 1 0 2Zm1-6a1 1 0 1 1-2 0 1 1 0 0 1 2 0ZM2 4a1 1 0 1 1 0-2 1 1 0 0 1 0 2Z"/></svg>
<div class="abs" style="left:0;top:0;transform:translate(1208.00px,216.69px);font-size:16px;font-weight:400;line-height:24px;color:#1f2328;-webkit-text-stroke:0.77px currentColor;"><span class="ft" id="h-about">About</span></div>
<svg style="position:absolute;left:0;top:0;transform:translate(1488.21px,219.84px);color:#59636e" width="16" height="16" viewBox="0 0 16 16" fill="currentColor"><path d="M8 0a8.2 8.2 0 0 1 .701.031C9.444.095 9.99.645 10.16 1.29l.288 1.107c.018.066.079.158.212.224.231.114.454.243.668.386.123.082.233.09.299.071l1.103-.303c.644-.176 1.392.021 1.82.63.27.385.506.792.704 1.218.315.675.111 1.422-.364 1.891l-.814.806c-.049.048-.098.147-.088.294.016.257.016.515 0 .772-.01.147.038.246.088.294l.814.806c.475.469.679 1.216.364 1.891a7.977 7.977 0 0 1-.704 1.217c-.428.61-1.176.807-1.82.63l-1.102-.302c-.067-.019-.177-.011-.3.071a5.909 5.909 0 0 1-.668.386c-.133.066-.194.158-.211.224l-.29 1.106c-.168.646-.715 1.196-1.458 1.26a8.006 8.006 0 0 1-1.402 0c-.743-.064-1.289-.614-1.458-1.26l-.289-1.106c-.018-.066-.079-.158-.212-.224a5.738 5.738 0 0 1-.668-.386c-.123-.082-.233-.09-.299-.071l-1.103.303c-.644.176-1.392-.021-1.82-.63a8.12 8.12 0 0 1-.704-1.218c-.315-.675-.111-1.422.363-1.891l.815-.806c.05-.048.098-.147.088-.294a6.214 6.214 0 0 1 0-.772c.01-.147-.038-.246-.088-.294l-.815-.806C.635 6.045.431 5.298.746 4.623a7.920 7.920 0 0 1 .704-1.217c.428-.61 1.176-.807 1.82-.63l1.102.302c.067.019.177.011.3-.071.214-.143.437-.272.668-.386.133-.066.194-.158.211-.224l.29-1.106C6.009.645 6.556.095 7.299.03 7.530.010 7.764 0 8 0Zm-.571 1.525c-.036.003-.108.036-.137.146l-.289 1.105c-.147.561-.549.967-.998 1.189-.173.086-.34.183-.5.29-.417.278-.97.423-1.529.27l-1.103-.303c-.109-.03-.175.016-.195.045-.22.312-.412.644-.573.99-.014.031-.021.11.059.19l.815.806c.411.406.562.957.53 1.456a4.709 4.709 0 0 0 0 .582c.032.499-.119 1.05-.53 1.456l-.815.806c-.081.08-.073.159-.059.19.162.346.353.677.573.989.02.03.085.076.195.046l1.102-.303c.56-.153 1.113-.008 1.53.27.161.107.328.204.501.29.447.222.85.629.997 1.189l.289 1.105c.029.109.101.143.137.146a6.600 6.600 0 0 0 1.142 0c.036-.003.108-.036.137-.146l.289-1.105c.147-.561.549-.967.998-1.189.173-.086.34-.183.5-.29.417-.278.97-.423 1.529-.27l1.103.303c.109.029.175-.016.195-.045.22-.313.411-.644.573-.99.014-.031.021-.11-.059-.19l-.815-.806c-.411-.406-.562-.957-.53-1.456a4.709 4.709 0 0 0 0-.582c-.032-.499.119-1.05.53-1.456l.815-.806c.081-.08.073-.159.059-.19a6.464 6.464 0 0 0-.573-.989c-.02-.03-.085-.076-.195-.046l-1.102.303c-.56.153-1.113.008-1.53-.27a4.440 4.440 0 0 0-.501-.29c-.447-.222-.85-.629-.997-1.189l-.289-1.105c-.029-.11-.101-.143-.137-.146a6.600 6.600 0 0 0-1.142 0ZM11 8a3 3 0 1 1-6 0 3 3 0 0 1 6 0ZM9.500 8a1.500 1.500 0 1 0-3.001.001A1.500 1.500 0 0 0 9.500 8Z"/></svg>
<div class="abs" style="left:0;top:0;transform:translate(1208.00px,257.23px);font-size:16px;font-weight:400;line-height:24px;color:#1f2328;"><span class="ft" id="desc1">Topic-based search and classification</span></div>
<div class="abs" style="left:0;top:0;transform:translate(1208.00px,281.33px);font-size:16px;font-weight:400;line-height:24px;color:#1f2328;"><span class="ft" id="desc2">engine.</span></div>
<svg style="position:absolute;left:0;top:0;transform:translate(1208.00px,322.03px);color:#59636e" width="16" height="16" viewBox="0 0 16 16" fill="currentColor"><path d="M0 1.750A.750.750 0 0 1 .750 1h4.253c1.227 0 2.317.590 3 1.501A3.743 3.743 0 0 1 11.006 1h4.245a.750.750 0 0 1 .750.750v10.500a.750.750 0 0 1-.750.750h-4.507a2.250 2.250 0 0 0-1.591.659l-.622.621a.750.750 0 0 1-1.060 0l-.622-.621A2.250 2.250 0 0 0 5.258 13H.750a.750.750 0 0 1-.750-.750Zm7.251 10.324.004-5.073-.002-2.253A2.250 2.250 0 0 0 5.003 2.500H1.500v9h3.757a3.750 3.750 0 0 1 1.994.574ZM8.755 4.750l-.004 7.322a3.752 3.752 0 0 1 1.992-.572H14.500v-9h-3.495a2.250 2.250 0 0 0-2.250 2.250Z"/></svg>
<div class="abs" style="left:0;top:0;transform:translate(1236.05px,320.17px);font-size:14px;font-weight:400;line-height:21px;color:#59636e;"><span class="ft" id="sl0">Readme</span></div>
<svg style="position:absolute;left:0;top:0;transform:translate(1208.00px,351.03px);color:#59636e" width="16" height="16" viewBox="0 0 16 16" fill="currentColor"><path d="M8.750.750V2h.985c.304 0 .603.080.867.231l1.290.736c.038.022.080.033.124.033h2.234a.750.750 0 0 1 0 1.500h-.427l2.111 4.692a.750.750 0 0 1-.154.838l-.530-.530.529.531-.001.002-.002.002-.006.006-.006.005-.010.010-.045.040c-.210.176-.441.327-.686.450C14.556 10.780 13.880 11 13 11a4.498 4.498 0 0 1-2.023-.454 3.544 3.544 0 0 1-.686-.450l-.045-.040-.016-.015-.006-.006-.004-.004v-.001a.750.750 0 0 1-.154-.838L12.178 4.500h-.162c-.305 0-.604-.079-.868-.231l-1.290-.736a.245.245 0 0 0-.124-.033H8.750V13h2.500a.750.750 0 0 1 0 1.500h-6.500a.750.750 0 0 1 0-1.500h2.500V3.500h-.984a.245.245 0 0 0-.124.033l-1.289.737c-.265.150-.564.230-.869.230h-.162l2.112 4.692a.750.750 0 0 1-.154.838l-.530-.530.529.531-.001.002-.002.002-.006.006-.016.015-.045.040c-.210.176-.441.327-.686.450C4.556 10.780 3.880 11 3 11a4.498 4.498 0 0 1-2.023-.454 3.544 3.544 0 0 1-.686-.450l-.045-.040-.016-.015-.006-.006-.004-.004v-.001a.750.750 0 0 1-.154-.838L2.178 4.500H1.750a.750.750 0 0 1 0-1.500h2.234a.249.249 0 0 0 .125-.033l1.288-.737c.265-.150.564-.230.869-.230h.984V.750a.750.750 0 0 1 1.500 0Zm2.945 8.477c.285.135.718.273 1.305.273s1.020-.138 1.305-.273L13 6.327Zm-10 0c.285.135.718.273 1.305.273s1.020-.138 1.305-.273L3 6.327Z"/></svg>
<div class="abs" style="left:0;top:0;transform:translate(1236.05px,349.17px);font-size:14px;font-weight:400;line-height:21px;color:#59636e;"><span class="ft" id="sl1">MIT license</span></div>
<svg style="position:absolute;left:0;top:0;transform:translate(1208.00px,380.03px);color:#59636e" width="16" height="16" viewBox="0 0 16 16" fill="currentColor"><path d="M6 2c.306 0 .582.187.696.471L10 10.731l1.304-3.260A.751.751 0 0 1 12 7h3.250a.750.750 0 0 1 0 1.500h-2.742l-1.812 4.528a.751.751 0 0 1-1.392 0L6 4.770 4.696 8.030A.750.750 0 0 1 4 8.500H.750a.750.750 0 0 1 0-1.500h2.742l1.812-4.529A.751.751 0 0 1 6 2Z"/></svg>
<div class="abs" style="left:0;top:0;transform:translate(1236.05px,378.17px);font-size:14px;font-weight:400;line-height:21px;color:#59636e;"><span class="ft" id="sl2">Activity</span></div>
<svg style="position:absolute;left:0;top:0;transform:translate(1208.00px,409.03px);color:#59636e" width="16" height="16" viewBox="0 0 16 16" fill="currentColor"><path d="M8 .25a.750.750 0 0 1 .673.418l1.882 3.815 4.210.612a.750.750 0 0 1 .416 1.279l-3.046 2.970.719 4.192a.751.751 0 0 1-1.088.791L8 12.347l-3.766 1.980a.750.750 0 0 1-1.088-.790l.720-4.194L.818 6.374a.750.750 0 0 1 .416-1.280l4.210-.611L7.327.668A.750.750 0 0 1 8 .250Zm0 2.445L6.615 5.500a.750.750 0 0 1-.564.410l-3.097.450 2.240 2.184a.750.750 0 0 1 .216.664l-.528 3.084 2.769-1.456a.750.750 0 0 1 .698 0l2.770 1.456-.530-3.084a.750.750 0 0 1 .216-.664l2.240-2.183-3.096-.450a.750.750 0 0 1-.564-.410L8 2.694Z"/></svg>
<div class="abs" style="left:0;top:0;transform:translate(1236.05px,407.17px);font-size:14px;font-weight:400;line-height:21px;color:#59636e;"><span class="ft" id="sl3"><b>0</b> stars</span></div>
<svg style="position:absolute;left:0;top:0;transform:translate(1208.00px,438.04px);color:#59636e" width="16" height="16" viewBox="0 0 16 16" fill="currentColor"><path d="M8 2c1.981 0 3.671.992 4.933 2.078 1.270 1.091 2.187 2.345 2.637 3.023a1.620 1.620 0 0 1 0 1.798c-.450.678-1.367 1.932-2.637 3.023C11.670 13.008 9.981 14 8 14c-1.981 0-3.671-.992-4.933-2.078C1.797 10.830.880 9.576.430 8.898a1.620 1.620 0 0 1 0-1.798c.450-.677 1.367-1.931 2.637-3.022C4.330 2.992 6.019 2 8 2ZM1.679 7.932a.120.120 0 0 0 0 .136c.411.622 1.241 1.750 2.366 2.717C5.176 11.758 6.527 12.500 8 12.500c1.473 0 2.825-.742 3.955-1.715 1.124-.967 1.954-2.096 2.366-2.717a.120.120 0 0 0 0-.136c-.412-.621-1.242-1.750-2.366-2.717C10.824 4.242 9.473 3.500 8 3.500c-1.473 0-2.825.742-3.955 1.715-1.124.967-1.954 2.096-2.366 2.717ZM8 10a2 2 0 1 1-.001-3.999A2 2 0 0 1 8 10Z"/></svg>
<div class="abs" style="left:0;top:0;transform:translate(1236.05px,436.18px);font-size:14px;font-weight:400;line-height:21px;color:#59636e;"><span class="ft" id="sl4"><b>0</b> watching</span></div>
<svg style="position:absolute;left:0;top:0;transform:translate(1208.00px,467.04px);color:#59636e" width="16" height="16" viewBox="0 0 16 16" fill="currentColor"><path d="M5 5.372v.878c0 .414.336.75.75.75h4.5a.75.75 0 0 0 .75-.75v-.878a2.25 2.25 0 1 1 1.5 0v.878a2.25 2.25 0 0 1-2.25 2.25h-1.5v2.128a2.251 2.251 0 1 1-1.5 0V8.5h-1.5A2.25 2.25 0 0 1 3.5 6.25v-.878a2.25 2.25 0 1 1 1.5 0ZM5 3.25a.75.75 0 1 0-1.5 0 .75.75 0 0 0 1.5 0Zm6.75.75a.75.75 0 1 0 0-1.5.75.75 0 0 0 0 1.5Zm-3 8.75a.75.75 0 1 0-1.5 0 .75.75 0 0 0 1.5 0Z"/></svg>
<div class="abs" style="left:0;top:0;transform:translate(1236.05px,465.18px);font-size:14px;font-weight:400;line-height:21px;color:#59636e;"><span class="ft" id="sl5"><b>0</b> forks</span></div>
<div class="abs" style="left:0;top:0;transform:translate(1208.00px,502.08px);width:296.00px;height:1.07px;background:#d1d9e0b3"></div>
<div class="abs" style="left:0;top:0;transform:translate(1208.00px,520.16px);font-size:16px;font-weight:400;line-height:24px;color:#1f2328;-webkit-text-stroke:0.77px currentColor;"><span class="ft" id="h-rel">Releases</span></div>
<div class="abs" style="left:0;top:0;transform:translate(1208.00px,559.85px);font-size:12px;font-weight:400;line-height:18px;color:#59636e;"><span class="ft" id="norel">No releases published</span></div>
<div class="abs" style="left:0;top:0;transform:translate(1208.00px,577.88px);font-size:12px;font-weight:400;line-height:18px;color:#0969da;"><span class="ft" id="crel"><a>Create a new release</a></span></div>
<div class="abs" style="left:0;top:0;transform:translate(1208.00px,610.88px);width:296.00px;height:1.07px;background:#d1d9e0b3"></div>
<div class="abs" style="left:0;top:0;transform:translate(1208.00px,628.96px);font-size:16px;font-weight:400;line-height:24px;color:#1f2328;-webkit-text-stroke:0.77px currentColor;"><span class="ft" id="h-pkg">Packages</span></div>
<div class="abs" style="left:0;top:0;transform:translate(1208.00px,668.65px);font-size:12px;font-weight:400;line-height:18px;color:#59636e;"><span class="ft" id="nopkg">No packages published</span></div>
<div class="abs" style="left:0;top:0;transform:translate(1208.00px,686.79px);font-size:12px;font-weight:400;line-height:18px;color:#0969da;"><span class="ft" id="ppkg"><a>Publish your first package</a></span></div>
<div class="abs" style="left:0;top:0;transform:translate(1208.00px,719.89px);width:296.00px;height:1.07px;background:#d1d9e0b3"></div>
<div class="abs" style="left:0;top:0;transform:translate(1208.00px,737.76px);font-size:16px;font-weight:400;line-height:24px;color:#1f2328;-webkit-text-stroke:0.77px currentColor;"><span class="ft" id="h-lang">Languages</span></div>
<div class="abs" style="left:0;top:0;transform:translate(1208.00px,777.28px);width:296.0px;height:8.0px;border-radius:6px;overflow:hidden;background:#fff"><span style="position:absolute;left:0;top:0;height:100%;width:252.6px;background:#3572A5"></span><span style="position:absolute;left:254.6px;top:0;height:100%;width:29.2px;background:#e34c26"></span><span style="position:absolute;left:285.8px;top:0;height:100%;right:0;background:#89e051"></span></div>
<div class="dot" style="left:0;top:0;transform:translate(1212.00px,798.35px);background:#3572A5"></div>
<div class="abs" style="left:0;top:0;transform:translate(1232.53px,793.77px);font-size:12px;font-weight:400;line-height:18px;color:#1f2328;-webkit-text-stroke:0.58px currentColor;"><span class="ft" id="lg-py">Python</span></div>
<div class="abs" style="left:0;top:0;transform:translate(1278.40px,793.77px);font-size:12px;font-weight:400;line-height:18px;color:#1f2328;"><span class="ft" id="lg-pyp">86.4%</span></div>
<div class="dot" style="left:0;top:0;transform:translate(1338.51px,798.35px);background:#e34c26"></div>
<div class="abs" style="left:0;top:0;transform:translate(1359.25px,793.77px);font-size:12px;font-weight:400;line-height:18px;color:#1f2328;-webkit-text-stroke:0.58px currentColor;"><span class="ft" id="lg-ht">HTML</span></div>
<div class="abs" style="left:0;top:0;transform:translate(1398.08px,793.77px);font-size:12px;font-weight:400;line-height:18px;color:#1f2328;"><span class="ft" id="lg-htp">10.1%</span></div>
<div class="dot" style="left:0;top:0;transform:translate(1212.00px,820.53px);background:#89e051"></div>
<div class="abs" style="left:0;top:0;transform:translate(1232.53px,815.96px);font-size:12px;font-weight:400;line-height:18px;color:#1f2328;-webkit-text-stroke:0.58px currentColor;"><span class="ft" id="lg-sh">Shell</span></div>
<div class="abs" style="left:0;top:0;transform:translate(1265.92px,815.96px);font-size:12px;font-weight:400;line-height:18px;color:#1f2328;"><span class="ft" id="lg-shp">3.5%</span></div>
<div class="abs" style="left:0;top:0;transform:translate(1208.00px,853.97px);width:296.00px;height:1.07px;background:#d1d9e0b3"></div>
<div class="abs" style="left:0;top:0;transform:translate(1208.00px,872.16px);font-size:16px;font-weight:400;line-height:24px;color:#1f2328;-webkit-text-stroke:0.77px currentColor;"><span class="ft" id="h-sug">Suggested workflows</span></div>
<div class="abs" style="left:0;top:0;transform:translate(1208.00px,895.31px);font-size:14px;font-weight:400;line-height:21px;color:#59636e;"><span class="ft" id="based">Based on your tech stack</span></div>
</div>

<div id="redbox"></div>
<div id="botshadow"></div>
<div class="corner" style="left:0"></div><div class="corner" style="right:0;transform:scaleX(-1)"></div>

</body></html>
